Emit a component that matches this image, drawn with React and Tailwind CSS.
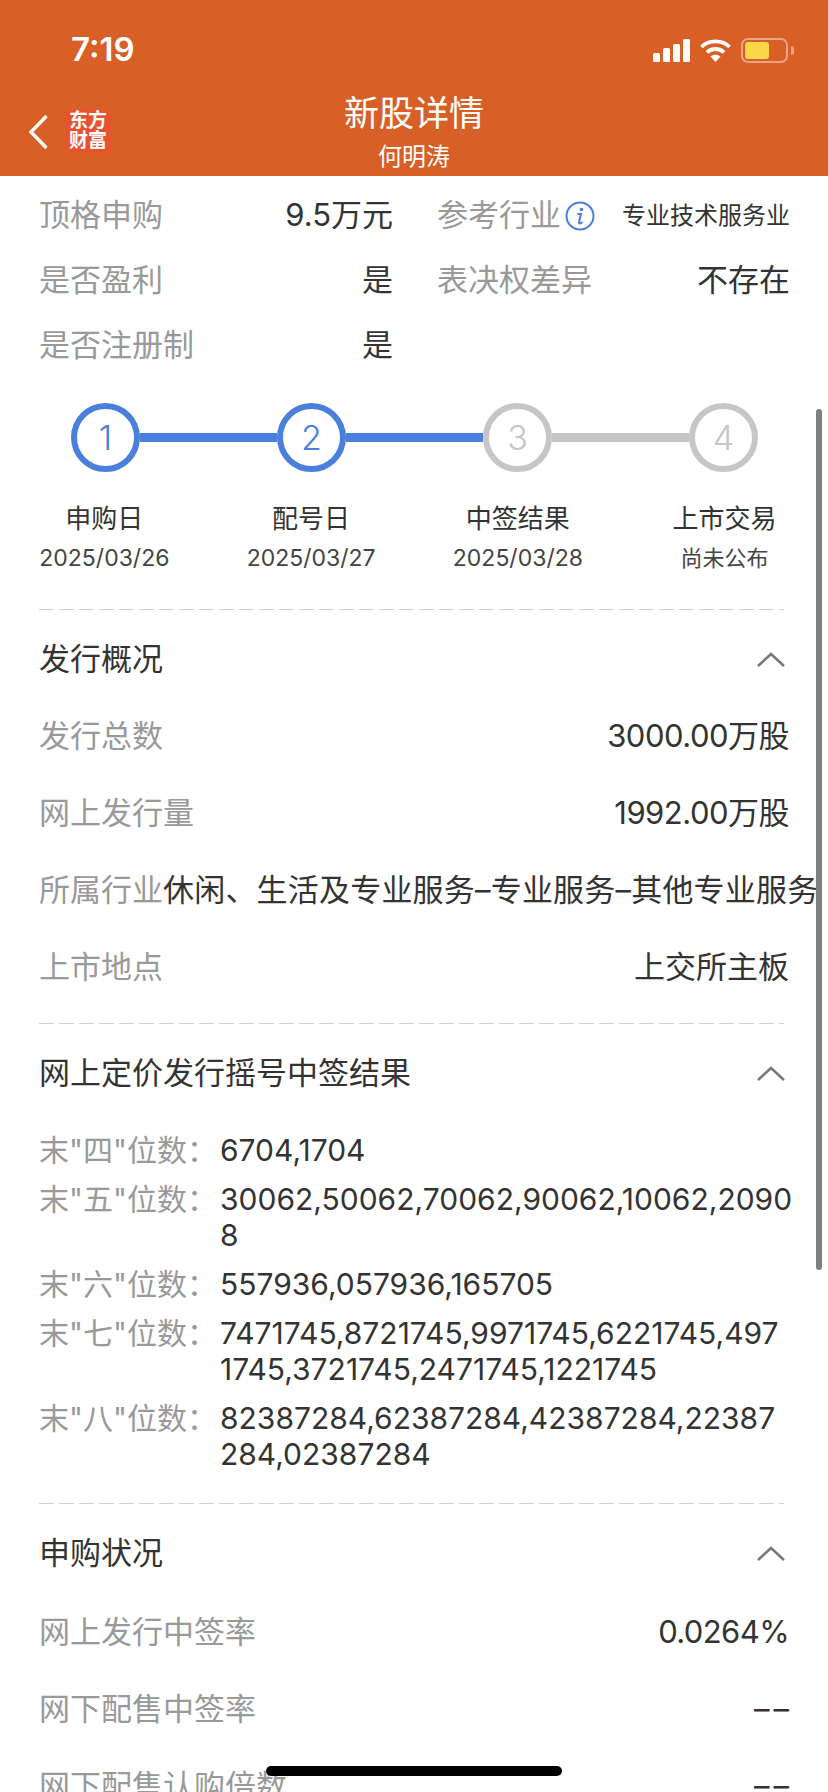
import React from "react";

const font = { fontFamily: '"Inter", "Noto Sans CJK SC", sans-serif' };

function Chevron() {
  return (
    <svg width="28" height="15" viewBox="0 0 28 15" fill="none" stroke="#777" strokeWidth="2.5">
      <path d="M1 14 L14 2 L27 14" />
    </svg>
  );
}

function Divider() {
  return <div className="ml-[39px] h-[1px] w-[745px] bg-[repeating-linear-gradient(90deg,#d0d0d0_0_15px,transparent_15px_20px)]" />;
}

function SectionHead({ title }) {
  return (
    <div className="mt-[19px] flex h-[60px] items-center justify-between pl-[39px] pr-[43px]">
      <span className="text-[31px] leading-[40px] text-[#333]">{title}</span>
      <Chevron />
    </div>
  );
}

function Row({ label, value, valueClass = "" }) {
  return (
    <div className="flex h-[77px] items-center justify-between pl-[39px] pr-[39px] text-[31px]">
      <span className="text-[#999]">{label}</span>
      <span className={`text-[#333] ${valueClass}`}>{value}</span>
    </div>
  );
}

function WideRow({ label, value }) {
  return (
    <div className="flex h-[77px] items-center whitespace-nowrap pl-[39px] text-[31px]">
      <span className="text-[#999]">{label}</span>
      <span className="tracking-[0.2px] text-[#333]">{value}</span>
    </div>
  );
}

function MiniRow({ label, children, small }) {
  return (
    <div className="flex h-[65px] items-center justify-between text-[31px]">
      <span className="flex items-center text-[#999]">{label}</span>
      <span className={small ? "text-[24px] text-[#333]" : "text-[#333]"}>{children}</span>
    </div>
  );
}

function Step({ n, on }) {
  return (
    <div className={`flex h-[69px] w-[69px] shrink-0 items-center justify-center rounded-full border-[6px] bg-white text-[34px] font-light ${on ? "border-[#4a7fdc] text-[#4a7fdc]" : "border-[#c6c6c6] text-[#c6c6c6]"}`}>
      {n}
    </div>
  );
}

function StepLabel({ title, date, small }) {
  return (
    <div className="flex flex-col items-center">
      <div className="text-[26px] leading-[36px] text-[#333]">{title}</div>
      <div className={`mt-[5px] leading-[32px] text-[#444] ${small ? "text-[22px]" : "text-[23px]"}`}>{date}</div>
    </div>
  );
}

function NumRow({ digit, lines }) {
  return (
    <div className="grid grid-cols-[180px_574px] pl-[39px] text-[30px] leading-[36px]">
      <span className="whitespace-nowrap text-[#999]">末"{digit}"位数：</span>
      <div className="pl-[1px] text-[#333]">
        {lines.map((line) => (
          <div key={line} className="whitespace-nowrap">{line}</div>
        ))}
      </div>
    </div>
  );
}

export default function App() {
  return (
    <div className="relative h-[1792px] w-[828px] overflow-hidden bg-white" style={font}>
      <header className="h-[176px] bg-[#d86027] pt-[26px] text-white">
        <div className="flex h-[48px] items-center justify-between pl-[71px] pr-[34px]">
          <span className="text-[33px] font-semibold">7:19</span>
          <div className="flex items-center gap-[10px]">
            <svg width="37" height="23" viewBox="0 0 37 23" fill="#fff">
              <rect x="0" y="14" width="7" height="9" rx="1.5" />
              <rect x="10" y="9" width="7" height="14" rx="1.5" />
              <rect x="20" y="5" width="7" height="18" rx="1.5" />
              <rect x="30" y="0" width="7" height="23" rx="1.5" />
            </svg>
            <svg width="31" height="24" viewBox="0 0 31 24" fill="none" stroke="#fff" strokeWidth="3.8">
              <path d="M1.5 9 C8.5 1.5 22.5 1.5 29.5 9" />
              <path d="M7 14.5 C11.5 9.8 19.5 9.8 24 14.5" />
              <path d="M15.5 24 L10.5 18.5 C13 16.2 18 16.2 20.5 18.5 Z" fill="#fff" stroke="none" />
            </svg>
            <div className="flex items-center">
              <div className="h-[25px] w-[47px] rounded-[7px] border-[2px] border-[#eba585] p-[2px]">
                <div className="h-full w-[24px] rounded-[3px] bg-[#fad84a]" />
              </div>
              <div className="ml-[3px] h-[9px] w-[3px] rounded-r-[3px] bg-[#eba585]" />
            </div>
          </div>
        </div>
        <div className="grid grid-cols-[1fr_auto_1fr]">
          <div className="flex items-center gap-[17px] pl-[29px] pt-[14px]">
            <svg className="mt-[3px]" width="19" height="34" viewBox="0 0 19 34" fill="none" stroke="#fff" strokeWidth="3.4">
              <path d="M17.5 1 L2 17 L17.5 33" />
            </svg>
            <div className="flex h-[44px] w-[46px] flex-col items-center justify-center rounded-[8px] bg-[#e8532f] text-[19px] font-bold leading-[20px]">
              <span>东方</span>
              <span>财富</span>
            </div>
          </div>
          <div className="flex flex-col items-center pt-[17px]">
            <div className="text-[35px] leading-[44px]">新股详情</div>
            <div className="mt-[6px] text-[24px] leading-[32px]">何明涛</div>
          </div>
          <div />
        </div>
      </header>

      <section className="pl-[39px] pt-[7px]">
        <div className="flex gap-[44px]">
          <div className="w-[354px] shrink-0"><MiniRow label="顶格申购">9.5万元</MiniRow></div>
          <div className="w-[353px] shrink-0">
            <MiniRow
              small
              label={
                <>
                  参考行业
                  <svg className="ml-[4px]" width="30" height="30" viewBox="0 0 30 30" fill="none">
                    <circle cx="15" cy="15" r="13.5" stroke="#4a7fdc" strokeWidth="2" />
                    <circle cx="16.5" cy="8.5" r="1.8" fill="#4a7fdc" />
                    <path d="M12.5 13 H16 L14 21.5 C13.8 22.8 15 22.8 17.5 21" stroke="#4a7fdc" strokeWidth="2" />
                  </svg>
                </>
              }
            >
              专业技术服务业
            </MiniRow>
          </div>
        </div>
        <div className="flex gap-[44px]">
          <div className="w-[354px] shrink-0"><MiniRow label="是否盈利">是</MiniRow></div>
          <div className="w-[353px] shrink-0"><MiniRow label="表决权差异">不存在</MiniRow></div>
        </div>
        <div className="flex gap-[44px]">
          <div className="w-[354px] shrink-0"><MiniRow label="是否注册制">是</MiniRow></div>
        </div>
      </section>

      <section className="mt-[25px]">
        <div className="flex items-center pl-[71px] pr-[70px]">
          <Step n="1" on />
          <div className="h-[9px] flex-1 bg-[#4a7fdc]" />
          <Step n="2" on />
          <div className="h-[9px] flex-1 bg-[#4a7fdc]" />
          <Step n="3" />
          <div className="h-[9px] flex-1 bg-[#c6c6c6]" />
          <Step n="4" />
        </div>
        <div className="ml-[1px] mt-[29px] grid grid-cols-4">
          <StepLabel title="申购日" date="2025/03/26" />
          <StepLabel title="配号日" date="2025/03/27" />
          <StepLabel title="中签结果" date="2025/03/28" />
          <StepLabel title="上市交易" date="尚未公布" small />
        </div>
      </section>

      <div className="mt-[35px]"><Divider /></div>
      <SectionHead title="发行概况" />
      <div className="mt-[9px]">
        <Row label="发行总数" value="3000.00万股" valueClass="tracking-[-0.5px]" />
        <Row label="网上发行量" value="1992.00万股" valueClass="tracking-[-0.5px]" />
        <WideRow label="所属行业" value="休闲、生活及专业服务–专业服务–其他专业服务" />
        <Row label="上市地点" value="上交所主板" />
      </div>

      <div className="mt-[17px]"><Divider /></div>
      <SectionHead title="网上定价发行摇号中签结果" />
      <div className="mt-[29px] flex flex-col gap-[13px]">
        <NumRow digit="四" lines={["6704,1704"]} />
        <NumRow digit="五" lines={["30062,50062,70062,90062,10062,2090", "8"]} />
        <NumRow digit="六" lines={["557936,057936,165705"]} />
        <NumRow digit="七" lines={["7471745,8721745,9971745,6221745,497", "1745,3721745,2471745,1221745"]} />
        <NumRow digit="八" lines={["82387284,62387284,42387284,22387", "284,02387284"]} />
      </div>

      <div className="mt-[31px]"><Divider /></div>
      <SectionHead title="申购状况" />
      <div className="mt-[11px]">
        <Row label="网上发行中签率" value="0.0264%" valueClass="tracking-[-0.6px]" />
        <Row label="网下配售中签率" value="––" valueClass="mr-[-4px] tracking-[4px]" />
        <Row label="网下配售认购倍数" value="––" valueClass="mr-[-4px] tracking-[4px]" />
      </div>

      <div className="absolute left-[816px] top-[409px] h-[861px] w-[6px] rounded-full bg-[#7f7f7f]" />
      <div className="absolute left-[266px] top-[1766px] h-[10px] w-[296px] rounded-full bg-black" />
    </div>
  );
}
